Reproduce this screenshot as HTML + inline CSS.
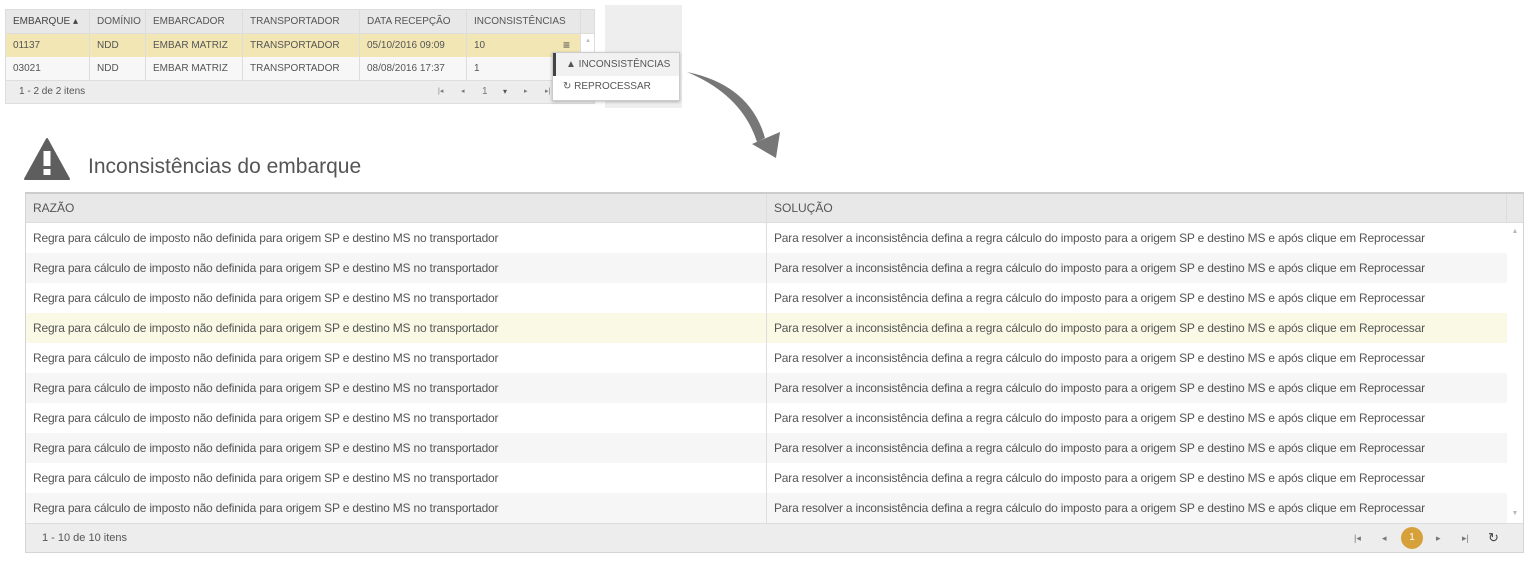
<!DOCTYPE html>
<html><head><meta charset="utf-8"><style>
*{margin:0;padding:0;box-sizing:border-box}
body{width:1532px;height:561px;background:#fff;font-family:"Liberation Sans",sans-serif;color:#555;position:relative;overflow:hidden}
.a{position:absolute;white-space:nowrap}
.st{left:5px;top:9px;width:590px;height:95px;border:1px solid #ddd;background:#fff}
.st .h,.st .r{position:absolute;left:0;width:588px;font-size:10px;white-space:nowrap}
.st .h{top:0;height:24px;background:#e8e8e8;border-bottom:1px solid #ddd}
.st .h span,.st .r span{position:absolute;top:0;height:100%;line-height:23px;padding-left:7px;border-right:1px solid #ddd}
.bt{left:25px;top:192px;width:1499px;height:361px;border:1px solid #d4d4d4;border-top:2px solid #ccc}
.bt .row{position:absolute;left:0;width:1481px;height:30px;font-size:12px;line-height:30px;white-space:nowrap;letter-spacing:-0.2px}
.bt .row span{position:absolute;top:0;padding-left:7px}
.bt .row .c2{left:740px;border-left:1px solid #ddd;height:100%}
</style></head><body>
<div class="a" style="left:605px;top:5px;width:77px;height:103px;background:#eee"></div>
<div class="a st">
 <div class="h">
  <span style="left:0;width:84px;color:#444">EMBARQUE ▴</span><span style="left:84px;width:56px">DOMÍNIO</span><span style="left:140px;width:97px">EMBARCADOR</span><span style="left:237px;width:117px">TRANSPORTADOR</span><span style="left:354px;width:107px">DATA RECEPÇÃO</span><span style="left:461px;width:114px">INCONSISTÊNCIAS</span>
 </div>
 <div class="r" style="top:24px;height:23px;background:#f2e6b4;width:574px">
  <span style="left:0;width:84px">01137</span><span style="left:84px;width:56px">NDD</span><span style="left:140px;width:97px">EMBAR MATRIZ</span><span style="left:237px;width:117px">TRANSPORTADOR</span><span style="left:354px;width:107px">05/10/2016 09:09</span><span style="left:461px;width:114px">10<b style="position:absolute;left:96px;font-size:12px;color:#444">≡</b></span>
 </div>
 <div class="r" style="top:47px;height:23px;background:#f7f7f7;width:574px">
  <span style="left:0;width:84px">03021</span><span style="left:84px;width:56px">NDD</span><span style="left:140px;width:97px">EMBAR MATRIZ</span><span style="left:237px;width:117px">TRANSPORTADOR</span><span style="left:354px;width:107px">08/08/2016 17:37</span><span style="left:461px;width:114px">1</span>
 </div>
 <div class="a" style="left:576px;top:24px;width:12px;height:46px;font-size:6px;color:#bbb;text-align:center;line-height:14px">▲</div>
 <div class="a" style="left:0;top:70px;width:588px;height:23px;background:#ededed;border-top:1px solid #ddd;font-size:10px;line-height:22px;padding-left:13px">1 - 2 de 2 itens
  <i class="a" style="left:432px;font-size:7px;color:#777;font-style:normal">|◂</i><i class="a" style="left:455px;font-size:7px;color:#777;font-style:normal">◂</i><i class="a" style="left:476px;color:#777;font-style:normal">1</i><i class="a" style="left:497px;font-size:8px;color:#555;font-style:normal">▾</i><i class="a" style="left:518px;font-size:7px;color:#777;font-style:normal">▸</i><i class="a" style="left:539px;font-size:7px;color:#777;font-style:normal">▸|</i></div>
</div>
<div class="a" style="left:552px;top:52px;width:128px;height:49px;background:#fff;border:1px solid #ccc;box-shadow:0 1px 3px rgba(0,0,0,.25);font-size:10px;color:#555">
 <div style="height:23px;line-height:23px;padding-left:10px;background:#f1f1f1;border-left:3px solid #444">▲ INCONSISTÊNCIAS</div>
 <div style="height:22px;line-height:22px;padding-left:10px">↻ REPROCESSAR</div>
</div>
<svg class="a" style="left:680px;top:60px" width="110" height="110">
 <path d="M7 12 Q70 25 85 78 L77 82 Q62 35 7 12Z" fill="#777"/>
 <path d="M72 84 L100 72 L96 98Z" fill="#777"/>
</svg>
<svg class="a" style="left:24px;top:137px" width="46" height="44">
 <path d="M23 2 L45 42 L1 42Z" fill="#5e5e5e" stroke="#5e5e5e" stroke-width="2" stroke-linejoin="round"/>
 <rect x="19.5" y="14" width="7" height="15" fill="#fff"/><rect x="19.5" y="32" width="7" height="6" fill="#fff"/>
</svg>
<div class="a" style="left:88px;top:155px;font-size:21px;color:#555">Inconsistências do embarque</div>
<div class="a bt">
 <div class="a" style="left:0;top:0;width:1497px;height:29px;background:#e8e8e8;border-bottom:1px solid #ddd;font-size:12px;line-height:29px">
  <span class="a" style="left:7px">RAZÃO</span><span class="a" style="left:740px;height:29px;border-left:1px solid #ddd;padding-left:7px">SOLUÇÃO</span><span class="a" style="left:1480px;height:29px;border-left:1px solid #ddd"></span>
 </div>
 <div id="rows"></div>
 <div class="a" style="left:1481px;top:29px;width:16px;height:300px;font-size:7px;color:#bbb;text-align:center"><div style="margin-top:5px">▲</div><div style="position:absolute;bottom:6px;width:16px">▼</div></div>
 <div class="a" style="left:0;top:329px;width:1497px;height:29px;background:#ededed;border-top:1px solid #ddd;font-size:11px;line-height:28px;padding-left:16px">1 - 10 de 10 itens
   <span class="a" style="left:1328px;font-size:9px;color:#777">|◂</span><span class="a" style="left:1356px;font-size:9px;color:#777">◂</span>
   <span class="a" style="left:1375px;top:3px;width:22px;height:22px;border-radius:11px;background:#d6a13b;color:#fff;text-align:center;line-height:22px;font-size:10px">1</span>
   <span class="a" style="left:1410px;font-size:9px;color:#777">▸</span><span class="a" style="left:1436px;font-size:9px;color:#777">▸|</span><span class="a" style="left:1462px;font-size:13px;color:#444">↻</span>
 </div>
</div>
<script>
var h='';for(var i=0;i<10;i++){var bg=i==3?'#f9f9e6':(i%2?'#f6f6f6':'#fff');h+='<div class="row" style="top:'+(29+i*30)+'px;background:'+bg+'"><span>Regra para cálculo de imposto não definida para origem SP e destino MS no transportador</span><span class="c2">Para resolver a inconsistência defina a regra cálculo do imposto para a origem SP e destino MS e após clique em Reprocessar</span></div>';}
document.getElementById('rows').innerHTML=h;
</script>
</body></html>
